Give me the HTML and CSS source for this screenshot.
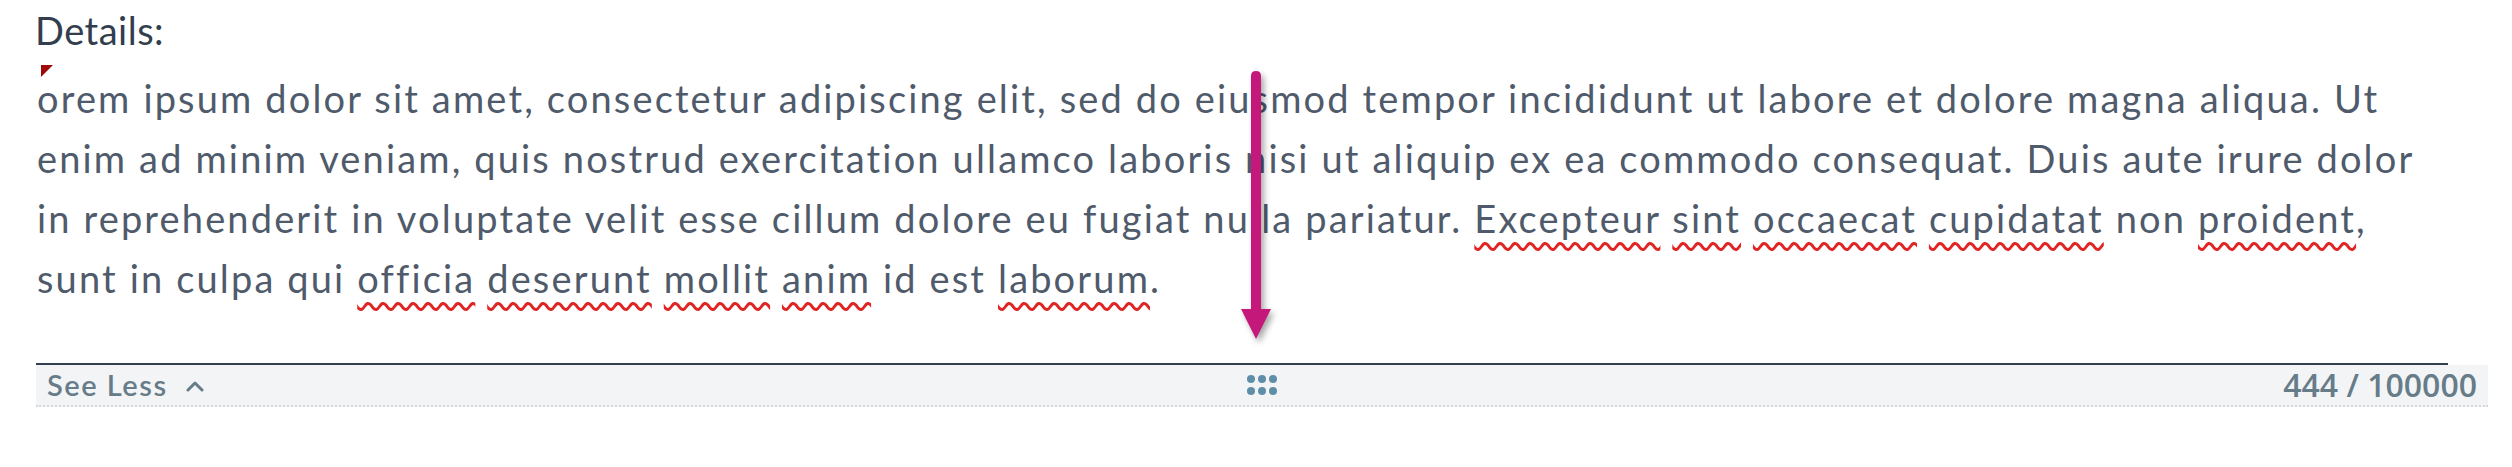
FILE: index.html
```html
<!DOCTYPE html>
<html lang="en">
<head>
<meta charset="utf-8">
<title>Details</title>
<link rel="stylesheet" href="styles.css">
</head>
<body>
<div class="field">
  <div class="label">Details:</div>
  <div class="editor">
    <span class="corner"></span>
    <p class="text">orem ipsum dolor sit amet, consectetur adipiscing elit, sed do eiusmod tempor incididunt ut labore et dolore magna aliqua. Ut<br>enim ad minim veniam, quis nostrud exercitation ullamco laboris nisi ut aliquip ex ea commodo consequat. Duis aute irure dolor<br>in reprehenderit in voluptate velit esse cillum dolore eu fugiat nulla pariatur. <span class="sp">Excepteur</span> <span class="sp">sint</span> <span class="sp">occaecat</span> <span class="sp">cupidatat</span> non <span class="sp">proident</span>,<br>sunt in culpa qui <span class="sp">officia</span> <span class="sp">deserunt</span> <span class="sp">mollit</span> <span class="sp">anim</span> id est <span class="sp">laborum</span>.</p>
  </div>
  <div class="bar">
    <button class="toggle">See Less
      <svg class="chev" width="18" height="12" viewBox="0 0 18 12"><polyline points="2,10 9,3 16,10" fill="none" stroke="currentColor" stroke-width="3" stroke-linecap="round" stroke-linejoin="round"/></svg>
    </button>
    <span class="grip">
      <svg width="30" height="22" viewBox="0 0 30 22"><g fill="#5f8fa8"><circle cx="4" cy="5" r="4"/><circle cx="15" cy="5" r="4"/><circle cx="26" cy="5" r="4"/><circle cx="4" cy="17" r="4"/><circle cx="15" cy="17" r="4"/><circle cx="26" cy="17" r="4"/></g></svg>
    </span>
    <span class="count">444 / 100000</span>
  </div>
  <svg class="arrow" width="44" height="290" viewBox="0 0 44 290">
    <path d="M17 10 Q17 5 22 5 Q27 5 27 10 L27 243 L37 243 L22 273 L7 243 L17 243 Z" fill="#c4197a"/>
  </svg>
</div>
</body>
</html>
```

FILE: styles.css
```css
html, body {
  margin: 0;
  padding: 0;
  background: #ffffff;
}
body {
  font-family: Lato, "Open Sans", sans-serif;
}
.field {
  position: relative;
  width: 2512px;
  height: 467px;
}
.label {
  margin: 6px 0 0 35px;
  font-size: 38px;
  line-height: 48px;
  color: #323d4e;
  height: 48px;
  letter-spacing: 0.5px;
}
.editor {
  position: relative;
  margin: 11px 0 0 36px;
  width: 2412px;
  padding: 3px 0 55px 0;
  border-bottom: 2px solid #333f50;
}
.corner {
  position: absolute;
  left: 5px;
  top: 0;
  width: 0;
  height: 0;
  border-top: 12px solid #a00a0a;
  border-right: 12px solid transparent;
}
.text {
  margin: 0;
  padding-left: 1px;
  font-size: 38px;
  line-height: 60px;
  letter-spacing: 2.15px;
  color: #4f5a6b;
  white-space: nowrap;
}
.sp {
  text-decoration: underline wavy #e02424;
  text-decoration-thickness: 2.5px;
  text-underline-offset: 9px;
}
.bar {
  margin-left: 36px;
  width: 2430px;
  height: 40px;
  background: #f3f4f6;
  border-bottom: 2px dotted #d6d8db;
  display: flex;
  align-items: center;
  justify-content: space-between;
  padding: 0 11px;
}
.toggle {
  display: flex;
  align-items: center;
  gap: 18px;
  background: none;
  border: 0;
  padding: 0;
  font-family: Lato, sans-serif;
  font-size: 29px;
  font-weight: 600;
  letter-spacing: 1.5px;
  line-height: 40px;
  color: #677c89;
  width: 300px;
}
.chev {
  color: #677c89;
  margin-top: 2px;
}
.grip {
  display: flex;
  align-items: center;
}
.count {
  width: 300px;
  text-align: right;
  font-family: "Open Sans", Lato, sans-serif;
  font-size: 32px;
  font-weight: 600;
  line-height: 40px;
  color: #677c89;
}
.arrow {
  position: absolute;
  left: 1234px;
  top: 60px;
  filter: drop-shadow(3px 4px 3px rgba(0, 0, 0, 0.35));
}
```
